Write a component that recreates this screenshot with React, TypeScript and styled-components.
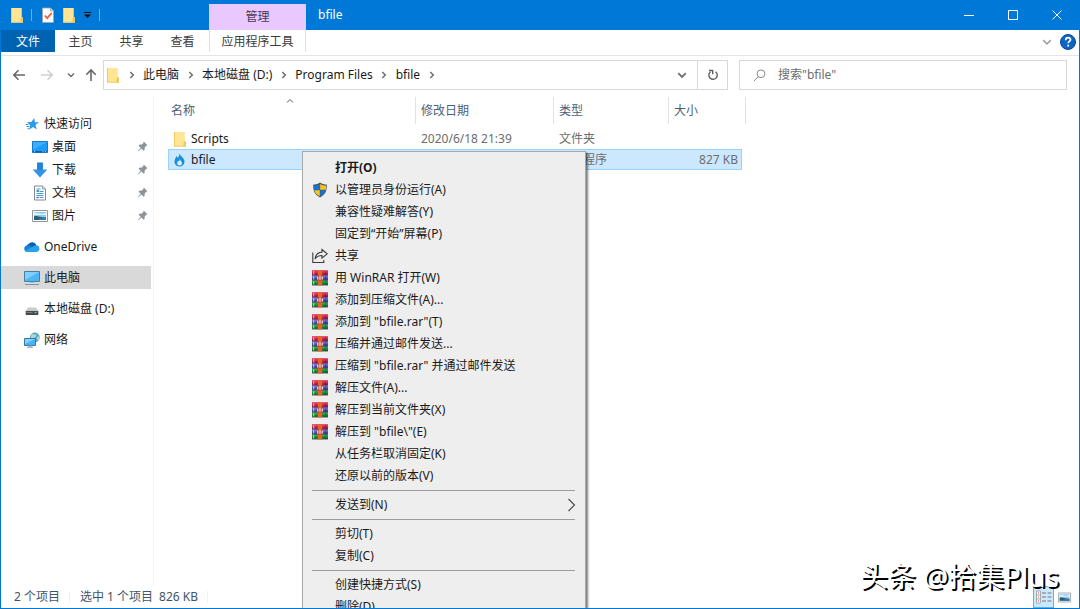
import React from "react";
import styled, { createGlobalStyle, css } from "styled-components";

const GlobalStyle = createGlobalStyle`
  *, *::before, *::after { box-sizing: border-box; }
  html, body, #root { height: 100%; }
  body { margin: 0; overflow: hidden; }
  body, button, input, table {
    font-family: "Noto Sans", "Noto Sans CJK SC", sans-serif;
    font-size: 12px;
    line-height: 20px;
    color: #1a1a1a;
  }
  button { padding: 0; margin: 0; border: 0; background: transparent; cursor: default; }
  svg { display: block; flex: none; }
`;

const Window = styled.div`
  position: relative;
  display: flex;
  flex-direction: column;
  height: 100%;
  overflow: hidden;
  background: #fff;
  border: 1px solid #0078d7;
  border-top: 0;
`;

/* Title bar */

const TitleBar = styled.header`
  display: flex;
  height: 30px;
  flex: none;
  background: #0078d7;
`;

const QuickAccess = styled.div`
  display: flex;
  align-items: center;
  width: 208px;
  padding-left: 5px;
`;

const QuickButton = styled.button<{ $narrow?: boolean }>`
  display: grid;
  place-items: center;
  width: ${(p) => (p.$narrow ? 16 : 21)}px;
  height: 22px;
`;

const QuickDivider = styled.span`
  width: 1px;
  height: 12px;
  margin: 0 5px 0 4px;
  background: #6db0e8;
`;

const ContextCaption = styled.div`
  width: 97px;
  margin-top: 4px;
  line-height: 26px;
  text-align: center;
  color: #463a52;
  background: #e8c8ff;
`;

const WindowTitle = styled.h1`
  flex: 1;
  margin: 0;
  padding-left: 12px;
  font-size: 12px;
  font-weight: 400;
  line-height: 30px;
  color: #fff;
`;

const WindowButton = styled.button`
  display: grid;
  place-items: center;
  width: 44px;
  height: 30px;
`;

/* Ribbon tabs */

const Ribbon = styled.nav`
  display: flex;
  flex: none;
  height: 26px;
  border-bottom: 1px solid #e4e5e6;
`;

const RibbonTab = styled.button<{ $kind?: "file" | "context" }>`
  width: 51px;
  height: 22px;
  padding-top: 2px;
  line-height: 20px;
  color: #3c3c3c;
  ${(p) =>
    p.$kind === "file" &&
    css`
      width: 54px;
      color: #fff;
      background: #0063b1;
    `}
  ${(p) =>
    p.$kind === "context" &&
    css`
      width: 97px;
      margin-left: 1px;
      border: solid #e0e0e0;
      border-width: 0 1px;
    `}
`;

const RibbonEnd = styled.div`
  display: flex;
  align-items: center;
  gap: 8px;
  margin-left: auto;
  padding: 0 3px 1px 0;
`;

/* Address row */

const AddressRow = styled.div`
  display: grid;
  grid-template-columns: 102px minmax(0, 59fr) minmax(0, 32fr);
  flex: none;
  height: 40px;
  padding: 4px 12px 6px 0;
`;

const History = styled.div`
  display: flex;
  align-items: center;
  padding-left: 4px;
`;

const HistoryButton = styled.button<{ $narrow?: boolean }>`
  display: grid;
  place-items: center;
  width: ${(p) => (p.$narrow ? 20 : 28)}px;
  height: 26px;
`;

const Field = styled.div`
  display: flex;
  align-items: center;
  height: 30px;
  border: 1px solid #d9d9d9;
`;

const Crumbs = styled.ol`
  display: flex;
  flex: 1;
  align-items: center;
  min-width: 0;
  margin: 0;
  padding: 0;
  list-style: none;

  li { display: flex; align-items: center; }
`;

const CrumbArrow = styled.span`
  display: grid;
  place-items: center;
  width: 23px;
`;

const FieldButton = styled.button<{ $divided?: boolean }>`
  display: grid;
  place-items: center;
  width: 30px;
  height: 28px;
  border-left: ${(p) => (p.$divided ? "1px solid #d9d9d9" : "0")};
`;

const FolderSlot = styled.span`
  padding-left: 2px;
`;

const SearchField = styled(Field).attrs({ as: "label" })`
  gap: 12px;
  margin-left: 11px;
  padding-left: 13px;
`;

const SearchInput = styled.input`
  flex: 1;
  min-width: 0;
  padding: 0;
  border: 0;
  outline: 0;
  background: transparent;
  &::placeholder { color: #6d6d6d; opacity: 1; }
`;

/* Body */

const Body = styled.div`
  display: flex;
  flex: 1;
  min-height: 0;
`;

const Sidebar = styled.nav`
  width: 153px;
  flex: none;
  margin-top: 1px;
  padding-top: 15px;
  border-right: 1px solid #f3f3f3;
`;

const Tree = styled.ul<{ $nested?: boolean }>`
  display: flex;
  flex-direction: column;
  gap: ${(p) => (p.$nested ? 0 : 8)}px;
  margin: 0;
  padding: 0;
  list-style: none;
`;

const TreeLink = styled.a<{ $level: number; $current?: boolean }>`
  display: flex;
  align-items: center;
  gap: 4px;
  height: 23px;
  margin-right: 2px;
  padding: 0 3px 0 ${(p) => 23 + p.$level * 8}px;
  color: #1a1a1a;
  text-decoration: none;
  background: ${(p) => (p.$current ? "#d9d9d9" : "transparent")};
`;

const TreeLabel = styled.span`
  flex: 1;
  white-space: nowrap;
`;

const Files = styled.main`
  flex: 1;
  min-width: 0;
  padding: 1px 0 0 14px;
`;

const FileTable = styled.table`
  width: 574px;
  table-layout: fixed;
  border-collapse: separate;
  border-spacing: 0;
`;

const HeadCell = styled.th<{ $width: number }>`
  position: relative;
  width: ${(p) => p.$width}px;
  height: 31px;
  padding: 0 0 4px 9px;
  font-weight: 400;
  text-align: left;
  color: #4c607a;
  &:first-child { padding-left: 3px; }

  &::after {
    content: "";
    position: absolute;
    top: 0;
    right: -4px;
    width: 1px;
    height: 27px;
    background: #e2e2e2;
  }
`;

const SortMark = styled.span`
  position: absolute;
  top: 0;
  left: 50%;
  margin-left: -4px;
`;

const FileRow = styled.tr<{ $selected?: boolean }>`
  td {
    height: 21px;
    padding: 0 0 0 9px;
    line-height: 19px;
    color: #6d6d6d;
    white-space: nowrap;
    border: solid transparent;
    border-width: 1px 0;
  }
  td:first-child { padding-left: 4px; color: #1a1a1a; border-left-width: 1px; }
  td:last-child { padding: 0 3px 0 0; text-align: right; border-right-width: 1px; }
  ${(p) =>
    p.$selected &&
    css`
      td { background: #cce8ff; border-color: #99d1ff; }
    `}
`;

const FileName = styled.span`
  display: flex;
  align-items: center;
  gap: 4px;
`;

/* Status bar */

const StatusBar = styled.footer`
  display: flex;
  align-items: center;
  flex: none;
  height: 22px;
  padding: 0 4px 0 13px;
  color: #42546c;
`;

const StatusItem = styled.span`
  display: flex;
  gap: 6px;
  margin-right: 10px;
  padding-right: 9px;
  line-height: 12px;
  border-right: 1px solid #f0f0f0;
`;

const ViewButtons = styled.div`
  display: flex;
  margin-left: auto;
`;

const ViewButton = styled.button<{ $on?: boolean }>`
  display: grid;
  place-items: center;
  width: 21px;
  height: 22px;
  border: 1px solid ${(p) => (p.$on ? "#5cb3e6" : "transparent")};
  background: ${(p) => (p.$on ? "#cce8ff" : "transparent")};
`;

const Watermark = styled.div`
  position: absolute;
  right: 20px;
  bottom: 12px;
  font-size: 28px;
  line-height: 40px;
  color: #fff;
  text-shadow: 2px 2px 0 #000;
  white-space: nowrap;
`;

/* Context menu */

const Menu = styled.ul`
  position: absolute;
  top: 151px;
  left: 301px;
  width: 284px;
  margin: 0;
  padding: 5px 2px;
  list-style: none;
  background: #eee;
  border: 1px solid #a8a8a8;
  box-shadow: 2px 2px 2px rgba(0, 0, 0, 0.5);
`;

const MenuItem = styled.button<{ $bold?: boolean }>`
  display: grid;
  grid-template-columns: 16px 1fr auto;
  column-gap: 7px;
  align-items: center;
  width: 100%;
  height: 22px;
  padding: 0 7px;
  text-align: left;
  white-space: nowrap;
  font-weight: ${(p) => (p.$bold ? 700 : 400)};
`;

const MenuRule = styled.li`
  height: 1px;
  margin: 3px 8px 3px 7px;
  background: #9d9d9d;
`;

/* Icons */

const FolderIcon = () => (
  <svg width="14" height="16" viewBox="0 0 14 16">
    <path d="M1 1h10.500v9.500h1.500v5h-12z" fill="#fbe08a" />
    <path d="M1 1h10.500v14.500h-10.500z" fill="#ffe594" />
    <path d="M1 1h.8v14.500h-.8z" fill="#e9c45c" />
    <path d="M11 10.500h2v5h-3z" fill="#f0c95c" />
    <path d="M1 14.700h12v.8h-12z" fill="#eccb69" />
  </svg>
);

const PropertiesIcon = () => (
  <svg width="14" height="16" viewBox="0 0 14 16">
    <path d="M1.500 1h8l3 3v11.500h-11z" fill="#fafafa" stroke="#9aa4ad" strokeWidth=".8" />
    <path d="M9.500 1v3h3" fill="#d5dade" stroke="#9aa4ad" strokeWidth=".8" />
    <path d="M3.800 8.500l2.400 2.700 4.500-5.200" fill="none" stroke="#e8623a" strokeWidth="1.800" />
  </svg>
);

const CustomizeIcon = () => (
  <svg width="9" height="8" viewBox="0 0 9 8">
    <path d="M1 1.500h7" stroke="#111" strokeWidth="1" />
    <path d="M1 3.500h7l-3.500 3.500z" fill="#111" />
  </svg>
);

const Chevron = ({ dir, size = 8, color = "#6e6e6e", weight = 1.5 }: { dir: "right" | "down" | "up"; size?: number; color?: string; weight?: number }) => (
  <svg width={size} height={size} viewBox="0 0 8 8" fill="none" stroke={color} strokeWidth={weight}>
    <path d={{ right: "M2.300 1l3 3-3 3", down: "M1 2.500l3 3 3-3", up: "M1 5.500l3-3 3 3" }[dir]} />
  </svg>
);

const SubmenuIcon = () => (
  <svg width="9" height="14" viewBox="0 0 9 14" fill="none" stroke="#444" strokeWidth="1.100">
    <path d="M1.500 1l6 6-6 6" />
  </svg>
);

const ArrowIcon = ({ dir, color = "#686868" }: { dir: "left" | "right" | "up"; color?: string }) => (
  <svg width="14" height="14" viewBox="0 0 14 14" fill="none" stroke={color} strokeWidth="1.600">
    <path
      d={
        {
          left: "M13 7h-11M6.500 2.300l-4.700 4.700 4.700 4.700",
          right: "M1 7h11M7.500 2.300l4.700 4.700-4.700 4.700",
          up: "M7 13v-11M2.300 6.700l4.700-4.700 4.700 4.700",
        }[dir]
      }
    />
  </svg>
);

const RefreshIcon = () => (
  <svg width="12" height="12" viewBox="0 0 12 12" fill="none" stroke="#5f5f5f" strokeWidth="1.400">
    <path d="M8.500 2.700a4.200 4.200 0 1 1-5 .1" />
    <path d="M2 1.500h3.700v3.700" />
  </svg>
);

const SearchIcon = () => (
  <svg width="13" height="13" viewBox="0 0 13 13" fill="none" stroke="#8a8a8a" strokeWidth="1">
    <circle cx="8" cy="4.800" r="3.900" />
    <path d="M5.200 7.700l-4.400 4.500" />
  </svg>
);

const HelpIcon = () => (
  <svg width="16" height="16" viewBox="0 0 16 16">
    <circle cx="8" cy="8" r="7.500" fill="#0b66c3" stroke="#084a92" />
    <path d="M5.700 6.200c0-3.400 4.800-3.100 4.800-.5 0 1.700-2.300 1.700-2.300 3.500" fill="none" stroke="#fff" strokeWidth="1.700" />
    <path d="M7.300 10.700h1.800v1.800h-1.800z" fill="#fff" />
  </svg>
);

const QuickStarIcon = () => (
  <svg width="16" height="16" viewBox="0 0 16 16">
    <path d="M10.200 2l.7 4.200 4.300.1-3.700 2.500 1.200 4.700-3.600-2.600-4 2.800 1.100-4.500-3.200-3.100 4.400-.2z" fill="#2a9be8" />
    <path d="M2.500 10.500h2.700M3.500 12.700h1.500M1.800 8.500h2.500" stroke="#2a7fc4" strokeWidth=".9" />
  </svg>
);

const DesktopIcon = () => (
  <svg width="16" height="16" viewBox="0 0 16 16">
    <path d="M.5 2.500h15v11h-15z" fill="#1c9bf7" stroke="#1479cc" />
    <path d="M1 3h14l-14 8z" fill="#3cb0ff" />
    <path d="M1 12h14v1.500h-14z" fill="#0f62b0" />
    <path d="M2 12.700h1M10.500 12.700h1M13 12.700h1" stroke="#fff" strokeWidth=".8" />
  </svg>
);

const DownloadIcon = () => (
  <svg width="16" height="16" viewBox="0 0 16 16">
    <path d="M5 .5h6v7h4.300l-7.300 8-7.300-8h4.300z" fill="#3492e4" />
    <path d="M5.400 .8h5.200v7h-5.200z" fill="#2583d8" />
  </svg>
);

const DocumentIcon = () => (
  <svg width="16" height="16" viewBox="0 0 16 16">
    <path d="M2.500 1h8l3 3v11h-11z" fill="#fff" stroke="#7e8b94" />
    <path d="M10.500 1v3h3" fill="#dce2e6" stroke="#7e8b94" strokeWidth=".8" />
    <path d="M4.500 4h4M7.500 6.500h4M4.500 8.500h7M4.500 10.500h7M7.500 12.500h4" stroke="#3b9ad8" />
    <path d="M4.500 6h2.500M4.500 12.500h2" stroke="#2c6f9c" strokeWidth="1.400" />
  </svg>
);

const PictureIcon = ({ width = 16 }: { width?: number }) => (
  <svg width={width} height={width} viewBox="0 0 16 16">
    <path d="M.5 2.500h15v11h-15z" fill="#fff" stroke="#8f989f" />
    <path d="M2 4h12v8h-12z" fill="#8ccaf3" />
    <path d="M2 5c4-1 6 2 12 0v2h-12z" fill="#dff2fd" />
    <path d="M2 8.500c3-1.500 5 1 12 1v2.500h-12z" fill="#2c5d6c" />
    <path d="M7 10.500l7-1v2.500h-7z" fill="#3278b8" />
  </svg>
);

const OneDriveIcon = () => (
  <svg width="16" height="16" viewBox="0 0 16 16">
    <path d="M4.500 5a4.600 4.600 0 0 1 8 1.500l-4 3-6-2.500a3 3 0 0 1 2-2z" fill="#0c5fb3" />
    <path d="M3.500 13a3.300 3.300 0 0 1 .2-6.600c1.800-.5 3 .6 8.500 4l-4 2.600z" fill="#1480d8" />
    <path d="M12.500 6.300a3.400 3.400 0 0 1 .2 6.700h-9.200c-1 0-2-.5-2.500-1.300l7.500-3.700c1-1 2.500-1.800 4-1.700z" fill="#27a3ee" />
  </svg>
);

const ComputerIcon = () => (
  <svg width="16" height="16" viewBox="0 0 16 16">
    <path d="M.5 1.500h15v10h-15z" fill="#4fb6f5" stroke="#4b7fa2" />
    <path d="M1 2h14l-14 8z" fill="#80d0fd" />
    <path d="M6 12h4v1h-4z" fill="#b7c1c8" />
    <path d="M1 14.500h14" stroke="#6f98b3" />
  </svg>
);

const DiskIcon = () => (
  <svg width="16" height="16" viewBox="0 0 16 16">
    <path d="M4 6.500h8l2.300 3.500h-12.600z" fill="#c9ccce" />
    <path d="M1.700 10h12.600v4h-12.600z" fill="#454a4d" />
    <path d="M2.500 11.500h6" stroke="#777d80" />
    <path d="M10.500 11.500h2" stroke="#51e06c" strokeWidth="1.200" />
  </svg>
);

const NetworkIcon = () => (
  <svg width="16" height="16" viewBox="0 0 16 16">
    <circle cx="10.800" cy="5.500" r="4.900" fill="#5fa4bf" />
    <path d="M7 3c2-2 3 0 4.500-.5s1 2.500-.5 3-3 1.500-4 .5zM12.500 6l2.500-2c1 2 .5 4-1 5z" fill="#a9d8d6" />
    <path d="M.5 6.500h11v7h-11z" fill="#49b2f3" stroke="#3a78a4" />
    <path d="M1 7h10l-10 5z" fill="#83d2fc" />
    <path d="M4 14h4M3 15.300h6" stroke="#7398ae" strokeWidth=".9" />
  </svg>
);

const PinIcon = () => (
  <svg width="11" height="11" viewBox="0 0 11 11">
    <path d="M6.700 .5l3.800 3.800-1.200.5-1.600 1.800-.1 2.500-1 .6-2.100-2.100-3.500 3-.3-.3 3-3.500-2.100-2.100.6-1 2.500-.1 1.700-1.700z" fill="#8b949b" />
  </svg>
);

const FlameIcon = () => (
  <svg width="14" height="16" viewBox="0 0 14 16">
    <path d="M6.300 1c.5 3 5.200 5 5.200 8.500a5 5 0 0 1-10 .2c0-2.700 1.500-3.700 2-5.700.8.500 1 1.200 1.100 2 1.300-1.500 2-2.500 1.700-5z" fill="#1b8fd2" />
    <path d="M6.700 7c.2 1.500 2.300 2.300 2.300 4.200a2.400 2.400 0 0 1-4.800 0c0-1.200.7-1.500 1-2.400.4.300.5.600.6.900.6-.7.900-1.500.9-2.700z" fill="#d6efff" />
  </svg>
);

const ShieldIcon = () => (
  <svg width="16" height="16" viewBox="0 0 16 16">
    <path d="M8 .6c2 1.500 4.300 2 6.800 2 .2 5.800-1.300 10.300-6.800 12.900-5.500-2.600-7-7.100-6.800-12.900 2.500 0 4.800-.5 6.800-2z" fill="#4b5560" />
    <path d="M7.800 2v5.800h-5.600c-.3-1.300-.3-2.500-.2-4.200 2.300-.1 4.100-.6 5.800-1.600z" fill="#1173d4" />
    <path d="M8.200 2c1.700 1 3.500 1.500 5.800 1.600.1 1.700.1 2.900-.2 4.200h-5.600z" fill="#fcc418" />
    <path d="M2.300 8.200h5.500v6c-3-1.400-4.800-3.500-5.500-6z" fill="#fcc418" />
    <path d="M13.700 8.200h-5.500v6c3-1.400 4.800-3.500 5.500-6z" fill="#1173d4" />
  </svg>
);

const ShareIcon = () => (
  <svg width="16" height="16" viewBox="0 0 16 16" fill="none" stroke="#3a3a3a" strokeWidth="1.100">
    <path d="M.8 4.500v10h11v-2.500" />
    <path d="M10 1.500l5.200 4.300-5.200 4.300v-2.600c-3 0-5.200.8-7 3.500.5-4.200 3-6.600 7-6.900z" />
  </svg>
);

const WinRarIcon = () => (
  <svg width="16" height="16" viewBox="0 0 16 16">
    <path d="M0 .5h16v4.500h-16z" fill="#b3174c" />
    <path d="M0 .5h16v2.200h-16z" fill="#e0345f" />
    <path d="M0 5.500h16v4.500h-16z" fill="#4046a8" />
    <path d="M0 5.500h16v2.200h-16z" fill="#6a6bd0" />
    <path d="M0 10.500h16v4.500h-16z" fill="#0f7a38" />
    <path d="M0 10.500h16v2.200h-16z" fill="#25a34b" />
    <path d="M0 5.200h16M0 10.200h16M0 15.200h16" stroke="#3a2f3c" strokeWidth=".6" />
    <path d="M1.700 1v3.500M1.700 6v3.500M1.700 11v3.500" stroke="#f2d24c" strokeWidth="1" />
    <path d="M13.700 1v14" stroke="#2b2440" strokeWidth=".7" opacity=".5" />
    <path d="M5.800 .5h4.400v14.800h-4.400z" fill="#e8641b" />
    <path d="M5 5h6v5.500h-6z" fill="#b8403c" />
    <path d="M5.800 9.500v-3M8 9.800v-4.300M10.200 9.500v-3" stroke="#fff" strokeWidth="1" />
  </svg>
);

const DetailsViewIcon = () => (
  <svg width="16" height="14" viewBox="0 0 16 14">
    <path d="M.5 1h4v12h-4z" fill="#fff" stroke="#9a9a9a" strokeWidth=".8" />
    <path d="M.5 5h4M.5 9h4" stroke="#9a9a9a" strokeWidth=".8" />
    <path d="M2 3h1M2 7h1M2 11h1" stroke="#d64b3c" strokeWidth="1.200" />
    <path d="M6 3h4M11.500 3h4M6 7h4M11.500 7h4M6 11h4M11.500 11h4" stroke="#777" />
  </svg>
);

/* Data */

type NavEntry = { label: string; icon: React.ReactNode; pinned?: boolean; current?: boolean; children?: NavEntry[] };

const navEntries: NavEntry[] = [
  {
    label: "快速访问",
    icon: <QuickStarIcon />,
    children: [
      { label: "桌面", icon: <DesktopIcon />, pinned: true },
      { label: "下载", icon: <DownloadIcon />, pinned: true },
      { label: "文档", icon: <DocumentIcon />, pinned: true },
      { label: "图片", icon: <PictureIcon />, pinned: true },
    ],
  },
  { label: "OneDrive", icon: <OneDriveIcon /> },
  { label: "此电脑", icon: <ComputerIcon />, current: true },
  { label: "本地磁盘 (D:)", icon: <DiskIcon /> },
  { label: "网络", icon: <NetworkIcon /> },
];

const crumbs = ["此电脑", "本地磁盘 (D:)", "Program Files", "bfile"];

const columns = [
  { label: "名称", width: 244 },
  { label: "修改日期", width: 138 },
  { label: "类型", width: 115 },
  { label: "大小", width: 77 },
];

type Entry = { label: string; icon?: React.ReactNode; bold?: boolean; submenu?: boolean };

const menuGroups: Entry[][] = [
  [
    { label: "打开(O)", bold: true },
    { label: "以管理员身份运行(A)", icon: <ShieldIcon /> },
    { label: "兼容性疑难解答(Y)" },
    { label: "固定到“开始”屏幕(P)" },
    { label: "共享", icon: <ShareIcon /> },
    { label: "用 WinRAR 打开(W)", icon: <WinRarIcon /> },
    { label: "添加到压缩文件(A)...", icon: <WinRarIcon /> },
    { label: '添加到 "bfile.rar"(T)', icon: <WinRarIcon /> },
    { label: "压缩并通过邮件发送...", icon: <WinRarIcon /> },
    { label: '压缩到 "bfile.rar" 并通过邮件发送', icon: <WinRarIcon /> },
    { label: "解压文件(A)...", icon: <WinRarIcon /> },
    { label: "解压到当前文件夹(X)", icon: <WinRarIcon /> },
    { label: '解压到 "bfile\\"(E)', icon: <WinRarIcon /> },
    { label: "从任务栏取消固定(K)" },
    { label: "还原以前的版本(V)" },
  ],
  [{ label: "发送到(N)", submenu: true }],
  [{ label: "剪切(T)" }, { label: "复制(C)" }],
  [{ label: "创建快捷方式(S)" }, { label: "删除(D)" }],
];

const NavItem = ({ entry, level = 0 }: { entry: NavEntry; level?: number }) => (
  <li>
    <TreeLink href="#" $level={level} $current={entry.current}>
      {entry.icon}
      <TreeLabel>{entry.label}</TreeLabel>
      {entry.pinned && <PinIcon />}
    </TreeLink>
    {entry.children && (
      <Tree $nested>
        {entry.children.map((c) => (
          <NavItem key={c.label} entry={c} level={level + 1} />
        ))}
      </Tree>
    )}
  </li>
);

export default function App() {
  return (
    <>
      <GlobalStyle />
      <Window>
        <TitleBar>
          <QuickAccess>
            <QuickButton aria-label="窗口菜单"><FolderIcon /></QuickButton>
            <QuickDivider />
            <QuickButton aria-label="属性"><PropertiesIcon /></QuickButton>
            <QuickButton aria-label="新建文件夹"><FolderIcon /></QuickButton>
            <QuickButton $narrow aria-label="自定义快速访问工具栏"><CustomizeIcon /></QuickButton>
            <QuickDivider />
          </QuickAccess>
          <ContextCaption>管理</ContextCaption>
          <WindowTitle>bfile</WindowTitle>
          <WindowButton aria-label="最小化">
            <svg width="10" height="10" stroke="#fff"><path d="M0 5.500h10" /></svg>
          </WindowButton>
          <WindowButton aria-label="最大化">
            <svg width="10" height="10" stroke="#fff" fill="none"><path d="M.5 .5h9v9h-9z" /></svg>
          </WindowButton>
          <WindowButton aria-label="关闭">
            <svg width="10" height="10" stroke="#fff"><path d="M.5 .5l9 9M9.500 .5l-9 9" /></svg>
          </WindowButton>
        </TitleBar>

        <Ribbon>
          <RibbonTab $kind="file">文件</RibbonTab>
          <RibbonTab>主页</RibbonTab>
          <RibbonTab>共享</RibbonTab>
          <RibbonTab>查看</RibbonTab>
          <RibbonTab $kind="context">应用程序工具</RibbonTab>
          <RibbonEnd>
            <button aria-label="展开功能区"><Chevron dir="down" size={10} color="#a0a0a0" weight={1.2} /></button>
            <button aria-label="帮助"><HelpIcon /></button>
          </RibbonEnd>
        </Ribbon>

        <AddressRow>
          <History>
            <HistoryButton aria-label="后退"><ArrowIcon dir="left" /></HistoryButton>
            <HistoryButton aria-label="前进"><ArrowIcon dir="right" color="#d0d0d0" /></HistoryButton>
            <HistoryButton $narrow aria-label="最近浏览的位置"><Chevron dir="down" size={8} /></HistoryButton>
            <HistoryButton $narrow aria-label="上移"><ArrowIcon dir="up" /></HistoryButton>
          </History>
          <Field>
            <FolderSlot><FolderIcon /></FolderSlot>
            <Crumbs>
              <li><CrumbArrow><Chevron dir="right" /></CrumbArrow></li>
              {crumbs.map((c) => (
                <li key={c}>
                  <button>{c}</button>
                  <CrumbArrow><Chevron dir="right" /></CrumbArrow>
                </li>
              ))}
            </Crumbs>
            <FieldButton aria-label="以前的位置"><Chevron dir="down" size={10} /></FieldButton>
            <FieldButton $divided aria-label="刷新"><RefreshIcon /></FieldButton>
          </Field>
          <SearchField>
            <SearchIcon />
            <SearchInput type="text" aria-label="搜索" placeholder={'搜索"bfile"'} />
          </SearchField>
        </AddressRow>

        <Body>
          <Sidebar>
            <Tree>
              {navEntries.map((e) => (
                <NavItem key={e.label} entry={e} />
              ))}
            </Tree>
          </Sidebar>
          <Files>
            <FileTable>
              <thead>
                <tr>
                  {columns.map((c, i) => (
                    <HeadCell key={c.label} $width={c.width} scope="col">
                      {c.label}
                      {i === 0 && <SortMark><Chevron dir="up" weight={1} color="#555" /></SortMark>}
                    </HeadCell>
                  ))}
                </tr>
              </thead>
              <tbody>
                <FileRow>
                  <td><FileName><FolderIcon />Scripts</FileName></td>
                  <td>2020/6/18 21:39</td>
                  <td>文件夹</td>
                  <td />
                </FileRow>
                <FileRow $selected>
                  <td><FileName><FlameIcon />bfile</FileName></td>
                  <td />
                  <td>应用程序</td>
                  <td>827 KB</td>
                </FileRow>
              </tbody>
            </FileTable>
          </Files>
        </Body>

        <StatusBar>
          <StatusItem>2 个项目</StatusItem>
          <StatusItem>
            <span>选中 1 个项目</span>
            <span>826 KB</span>
          </StatusItem>
          <ViewButtons>
            <ViewButton $on aria-label="详细信息"><DetailsViewIcon /></ViewButton>
            <ViewButton aria-label="大图标"><PictureIcon width={13} /></ViewButton>
          </ViewButtons>
        </StatusBar>

        <Menu>
          {menuGroups.map((group, g) => (
            <React.Fragment key={g}>
              {g > 0 && <MenuRule role="separator" />}
              {group.map((item) => (
                <li key={item.label}>
                  <MenuItem $bold={item.bold}>
                    <span>{item.icon}</span>
                    <span>{item.label}</span>
                    {item.submenu && <SubmenuIcon />}
                  </MenuItem>
                </li>
              ))}
            </React.Fragment>
          ))}
        </Menu>

        <Watermark>头条 @拾集Plus</Watermark>
      </Window>
    </>
  );
}
